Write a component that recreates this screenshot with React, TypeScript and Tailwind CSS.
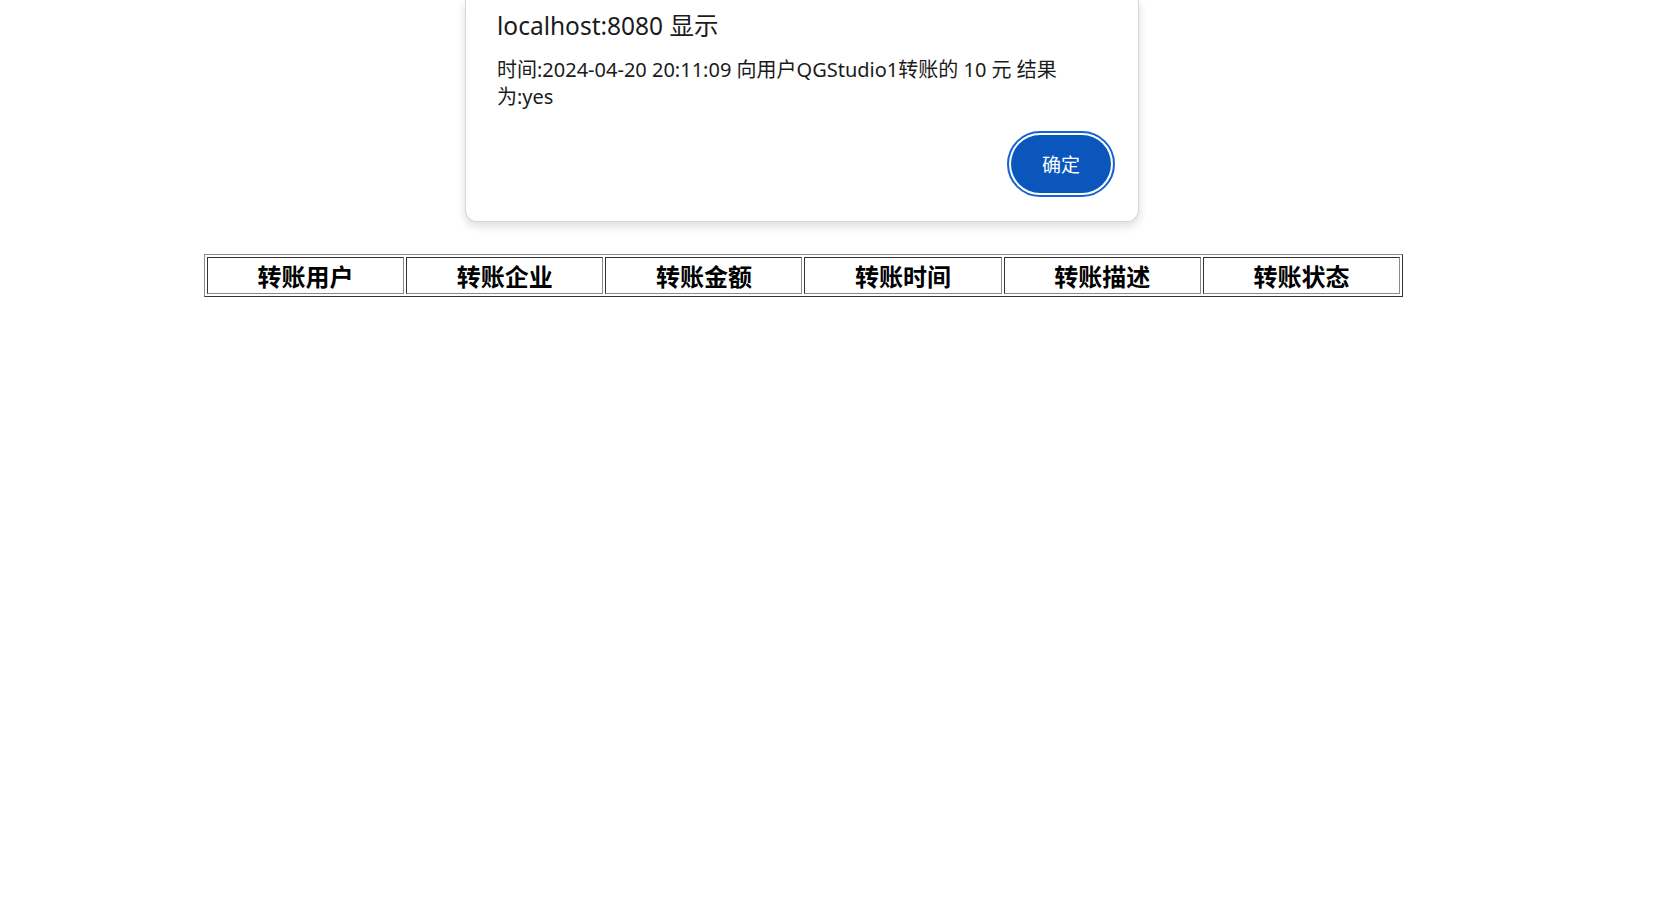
const headers = ['转账用户', '转账企业', '转账金额', '转账时间', '转账描述', '转账状态'];

export default function App() {
  return (
    <div className="relative min-h-[899px] w-full bg-white font-['Noto_Sans','Noto_Sans_CJK_SC',sans-serif] text-black">
      <div className="pl-[204px] pt-[254px]">
        <TransferTable />
      </div>
      <AlertDialog />
    </div>
  );
}

function TransferTable() {
  return (
    <table className="w-[1199px] table-fixed border-separate border-spacing-[2px] border border-solid border-t-[#8a8a8a] border-l-[#8a8a8a] border-r-[#333] border-b-[#333]">
      <thead>
        <tr>
          {headers.map((title) => (
            <th
              key={title}
              className="h-[37px] border border-solid border-t-[#333] border-l-[#333] border-r-[#8a8a8a] border-b-[#8a8a8a] p-0 text-center align-middle font-['Noto_Sans_CJK_SC',sans-serif] text-[24px] font-bold leading-[35px]"
            >
              {title}
            </th>
          ))}
        </tr>
      </thead>
      <tbody />
    </table>
  );
}

function AlertDialog() {
  return (
    <div className="absolute left-[465px] top-0 w-[674px] rounded-b-[12px] border border-t-0 border-[#d6d6d6] bg-white pl-[31px] pr-[27px] pb-[28px] shadow-[0_4px_10px_rgba(0,0,0,0.14)]">
      <h1 className="pt-[10px] text-[24.5px] leading-[32px] font-normal text-[#1b1b1b]">localhost:8080 显示</h1>
      <p className="mt-[14px] text-[20px] leading-[27px] text-[#1b1b1b]">
        时间:2024-04-20 20:11:09 向用户QGStudio1转账的 10 元 结果
        <br />
        为:yes
      </p>
      <div className="mt-[25px] flex justify-end">
        <button
          type="button"
          className="h-[58px] w-[100px] rounded-full bg-[#0b56bd] font-['Noto_Sans_CJK_SC',sans-serif] text-[19px] text-white outline-2 outline-offset-2 outline-solid outline-[#1463d6]"
        >
          确定
        </button>
      </div>
    </div>
  );
}
